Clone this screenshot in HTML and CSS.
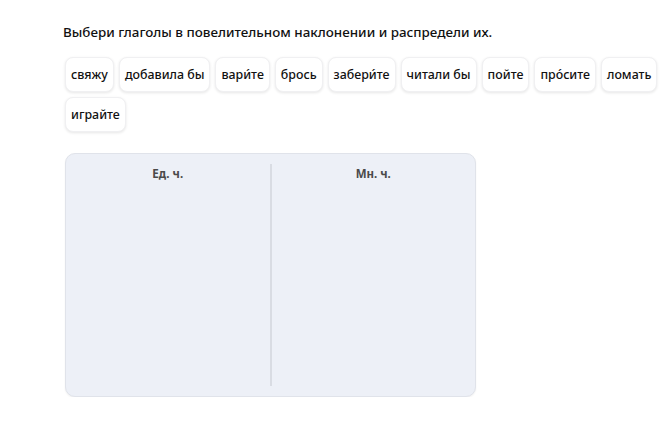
FILE: index.html
```html
<!DOCTYPE html>
<html lang="ru">

<head>
	<meta charset="UTF-8">
	<meta name="viewport" content="width=device-width, initial-scale=1.0">
	<title>Задание</title>
	<link rel="stylesheet" href="styles.css">
</head>

<body>
	<div class="task">
		<h2 class="task-title">Выбери глаголы в повелительном наклонении и распредели их.</h2>
		<div class="chips">
			<span class="chip">свяжу</span>
			<span class="chip">добавила бы</span>
			<span class="chip">вари́те</span>
			<span class="chip">брось</span>
			<span class="chip">забери́те</span>
			<span class="chip">читали бы</span>
			<span class="chip">пойте</span>
			<span class="chip">про́сите</span>
			<span class="chip">ломать</span>
			<span class="chip">играйте</span>
		</div>
		<div class="board">
			<div class="column">
				<div class="column-title">Ед. ч.</div>
			</div>
			<div class="divider"></div>
			<div class="column">
				<div class="column-title">Мн. ч.</div>
			</div>
		</div>
	</div>
</body>

</html>
```

FILE: styles.css
```css
body {
	margin: 0;
	background-color: #fff;
	color: #111;
	font-family: "Noto Sans", "Open Sans", sans-serif;
}

.task {
	padding: 22px 0 0 63px;
}

.task-title {
	margin: 0 0 15px 0;
	font-size: 13.4px;
	font-weight: 500;
	line-height: 20px;
}

.chips {
	display: flex;
	flex-wrap: wrap;
	gap: 5px;
	width: 620px;
	margin-left: 2px;
}

.chip {
	box-sizing: border-box;
	height: 35px;
	padding: 0 5px;
	display: flex;
	align-items: center;
	font-size: 12.4px;
	font-weight: 500;
	color: #111;
	background: #fff;
	border: 1px solid #f0f0f2;
	border-radius: 8px;
	box-shadow: 0 1px 3px rgba(0, 0, 0, 0.10);
}

.board {
	display: flex;
	box-sizing: border-box;
	width: 411px;
	height: 244px;
	margin: 21px 0 0 2px;
	padding: 10px 0;
	background: #edf0f7;
	border: 1px solid #e0e3ea;
	border-radius: 10px;
	box-shadow: 0 1px 2px rgba(0, 0, 0, 0.06);
}

.column {
	flex: 1;
	text-align: center;
}

.column-title {
	padding-top: 2px;
	font-size: 11.5px;
	font-weight: 700;
	color: #4a4a4a;
}

.divider {
	width: 2px;
	background: #d9dce3;
}
```
